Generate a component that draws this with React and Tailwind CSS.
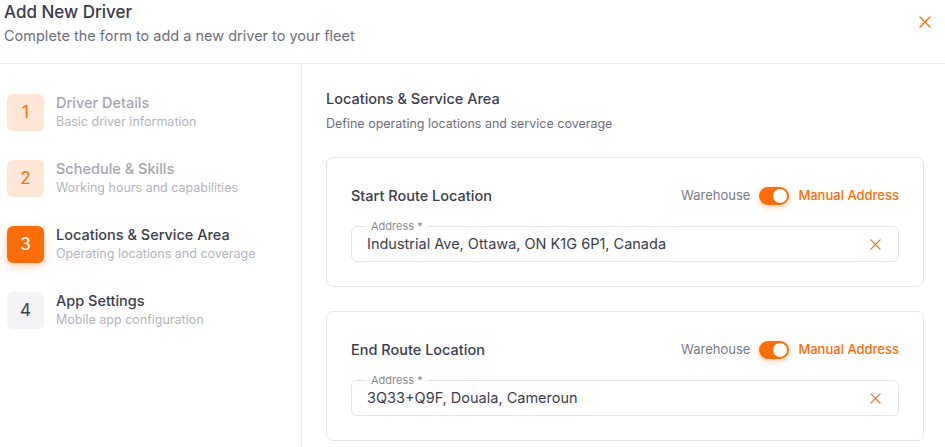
import React from 'react';

function XIcon({ className }) {
  return (
    <svg viewBox="0 0 12 12" className={className} fill="none" stroke="currentColor" strokeWidth="1.4" strokeLinecap="round">
      <path d="M1 1L11 11M11 1L1 11" />
    </svg>
  );
}

const steps = [
  { n: 1, title: 'Driver Details', sub: 'Basic driver information', state: 'done' },
  { n: 2, title: 'Schedule & Skills', sub: 'Working hours and capabilities', state: 'done' },
  { n: 3, title: 'Locations & Service Area', sub: 'Operating locations and coverage', state: 'active' },
  { n: 4, title: 'App Settings', sub: 'Mobile app configuration', state: 'todo' },
];

function Step({ step }) {
  const box =
    step.state === 'active'
      ? 'bg-[#ff6d0a] text-white shadow-[0_3px_8px_rgba(255,109,10,0.35)]'
      : step.state === 'done'
        ? 'bg-[#fee6d6] text-[#ff6d0a]'
        : 'bg-[#f4f4f6] text-[#3d3d4e]';
  const title = step.state === 'done' ? 'text-[#a6a6b0]' : 'text-[#3d3d4e]';
  return (
    <div className="flex h-[37px] items-center gap-3">
      <div className={`flex h-[37px] w-[37px] shrink-0 items-center justify-center rounded-[6px] text-[17px] font-normal ${box}`}>
        {step.n}
      </div>
      <div className="flex h-[37px] flex-col">
        <span className={`text-[14.5px] font-medium leading-[18px] ${title}`}>{step.title}</span>
        <span className="mt-[1px] text-[12.5px] leading-[18px] text-[#b4b4bd]">{step.sub}</span>
      </div>
    </div>
  );
}

function Toggle() {
  return (
    <div className="flex h-[18px] w-[30px] items-center justify-end rounded-full bg-[#ff6d0a] px-[2px] shadow-[0_2px_6px_rgba(255,109,10,0.35)]">
      <div className="h-[14px] w-[14px] rounded-full bg-white" />
    </div>
  );
}

function LocationCard({ title, value }) {
  return (
    <div className="rounded-[7px] border border-[#e6e6ea] px-6 pb-6 pt-6">
      <div className="flex h-[28px] items-center justify-between">
        <span className="text-[14.5px] font-medium text-[#3d3d4e]">{title}</span>
        <div className="flex items-center gap-[9px]">
          <span className="text-[13px] text-[#7a7a86]">Warehouse</span>
          <Toggle />
          <span className="text-[13px] font-medium text-[#ff6d0a]">Manual Address</span>
        </div>
      </div>
      <div className="relative mt-4 flex h-[36px] items-center justify-between rounded-[6px] border border-[#e3e3e8] pl-[15px] pr-[17px]">
        <span className="absolute -top-[7px] left-[14px] bg-white px-[5px] text-[11px] leading-[13px] text-[#8a8a94]">Address *</span>
        <span className="text-[14.5px] text-[#3d3d4e]">{value}</span>
        <XIcon className="h-[11px] w-[11px] text-[#ff6d0a]" />
      </div>
    </div>
  );
}

export default function App() {
  return (
    <div className="flex h-[447px] w-[945px] flex-col overflow-hidden bg-white" style={{ fontFamily: 'Inter, "Noto Sans", sans-serif' }}>
      <header className="flex h-[64px] shrink-0 items-start justify-between border-b border-[#e8e8ec] pl-1 pr-[14px]">
        <div className="flex flex-col">
          <h1 className="text-[17px] font-medium leading-[24px] text-[#3a3a4a]">Add New Driver</h1>
          <p className="text-[14.5px] leading-[24px] text-[#6e6e7a]">Complete the form to add a new driver to your fleet</p>
        </div>
        <XIcon className="mt-4 h-[12px] w-[12px] text-[#ff6d0a]" />
      </header>
      <div className="flex flex-1">
        <aside className="w-[302px] shrink-0 border-r border-[#e8e8ec] pl-[7px] pt-[30px]">
          <div className="flex flex-col gap-[29px]">
            {steps.map((s) => (
              <Step key={s.n} step={s} />
            ))}
          </div>
        </aside>
        <main className="flex-1 pl-[24px] pr-[21px] pt-[25px]">
          <h2 className="text-[14.5px] font-medium leading-[20px] text-[#3d3d4e]">Locations &amp; Service Area</h2>
          <p className="mt-[7px] text-[12.5px] leading-[16px] text-[#6e6e7a]">Define operating locations and service coverage</p>
          <div className="mt-[25px] flex flex-col gap-6">
            <LocationCard title="Start Route Location" value="Industrial Ave, Ottawa, ON K1G 6P1, Canada" />
            <LocationCard title="End Route Location" value="3Q33+Q9F, Douala, Cameroun" />
          </div>
        </main>
      </div>
    </div>
  );
}
